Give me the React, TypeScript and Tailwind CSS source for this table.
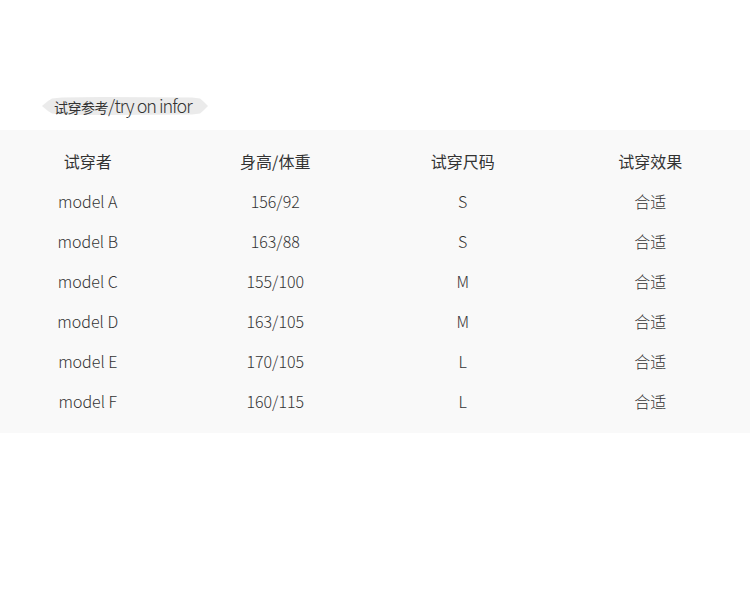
import React from "react";

const rows = [
  ["model A", "156/92", "S", "合适"],
  ["model B", "163/88", "S", "合适"],
  ["model C", "155/100", "M", "合适"],
  ["model D", "163/105", "M", "合适"],
  ["model E", "170/105", "L", "合适"],
  ["model F", "160/115", "L", "合适"],
];

const headers = ["试穿者", "身高/体重", "试穿尺码", "试穿效果"];

export default function App() {
  return (
    <div
      className="w-[750px] h-[589px] bg-white"
      style={{ fontFamily: '"Noto Sans CJK SC", "Noto Sans", sans-serif' }}
    >
      <div className="pt-[93px] pl-[42px] h-[130px]">
        <div className="relative w-[166px] h-[24px]">
          <svg className="absolute left-0 top-[2px]" width="166" height="22" viewBox="0 0 166 22">
            <polygon
              points="0,11 6,6 10,3.5 20,2.5 60,2 150,2.5 158,3.5 162,7 166,11 162,15 158,18.5 150,19.5 60,20 20,19.5 10,18.5 6,16"
              fill="#ebebeb"
            />
          </svg>
          <div className="relative flex items-baseline pl-[12px] text-[#333] leading-[24px] whitespace-nowrap">
            <span className="text-[14px] tracking-[-0.5px]">试穿参考</span>
            <span className="text-[18px] font-light tracking-[-1px]">/try on infor</span>
          </div>
        </div>
      </div>
      <div className="bg-[#f9f9f9] h-[303px] pt-[10px]">
        <div className="grid grid-cols-4 h-[41px] items-center text-[16px] text-[#333]">
          {headers.map((h) => (
            <div key={h} className="pr-[12px] text-center">{h}</div>
          ))}
        </div>
        {rows.map((r) => (
          <div key={r[0]} className="grid grid-cols-4 h-[40px] items-center text-[16px] text-[#333] font-light">
            {r.map((c, i) => (
              <div key={i} className="pr-[12px] text-center">{c}</div>
            ))}
          </div>
        ))}
      </div>
    </div>
  );
}
